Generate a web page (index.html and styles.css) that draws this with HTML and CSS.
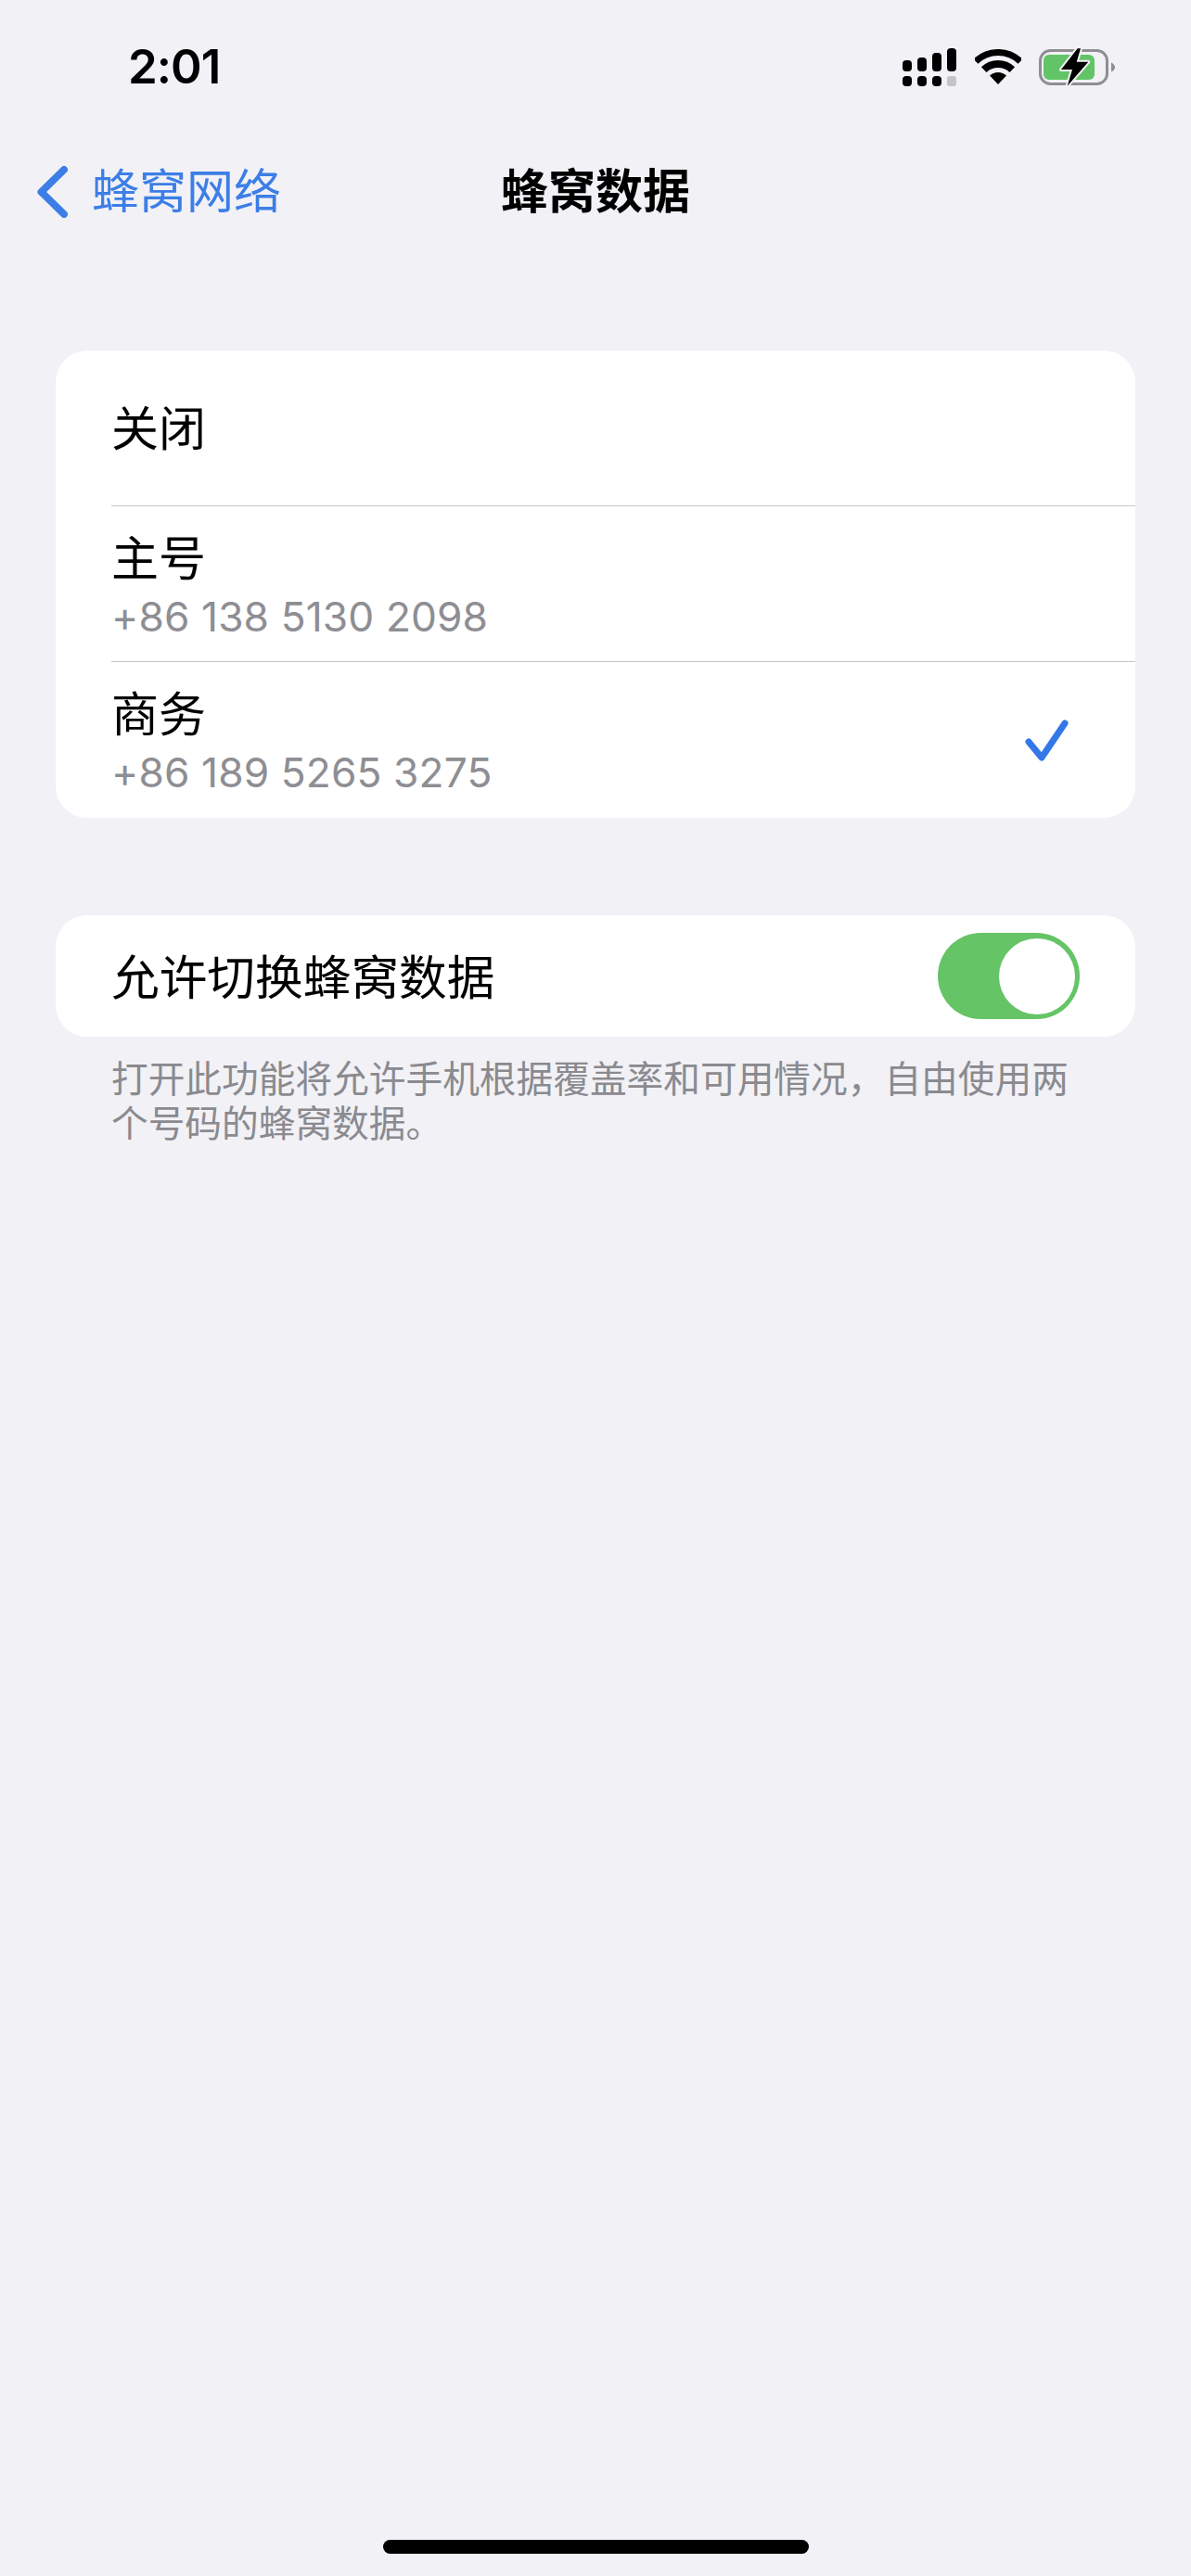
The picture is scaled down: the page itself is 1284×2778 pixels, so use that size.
FILE: index.html
```html
<!DOCTYPE html>
<html lang="zh-CN">
<head>
<meta charset="utf-8">
<title>蜂窝数据</title>
<link rel="stylesheet" href="styles.css">
</head>
<body>
<div class="screen">
  <header class="status">
    <span class="time">2:01</span>
    <div class="status-icons">
      <svg class="ic-signal" viewBox="0 0 58 41" width="58" height="41">
        <rect x="0" y="13" width="10" height="12" rx="4"/>
        <rect x="16" y="10" width="10" height="15" rx="4"/>
        <rect x="32" y="5" width="10" height="20" rx="4"/>
        <rect x="48" y="0" width="10" height="25" rx="4"/>
        <rect x="0" y="30" width="10" height="11" rx="4"/>
        <rect x="16" y="30" width="10" height="11" rx="4"/>
        <rect x="32" y="30" width="10" height="11" rx="4"/>
        <rect class="dim" x="48" y="30" width="10" height="11" rx="3"/>
      </svg>
      <svg class="ic-wifi" viewBox="0 0 50 38" width="50" height="38">
        <path class="arc" stroke-width="7" d="M1 13.2A34.5 34.5 0 0 1 49 13.2"/>
        <path class="arc" stroke-width="8" d="M9.7 22.2A22 22 0 0 1 40.3 22.2"/>
        <path d="M25 38L16 28.6A13 13 0 0 1 34 28.6Z"/>
      </svg>
      <svg class="ic-battery" viewBox="0 0 82 42" width="82" height="42">
        <rect class="bat-shell" x="1.500" y="2.500" width="72" height="36" rx="11"/>
        <rect class="bat-fill" x="5" y="7" width="55" height="27" rx="6"/>
        <path class="bat-nub" d="M78 15.500C80.500 16.500 82 18.500 82 20.500C82 22.500 80.500 24.500 78 25.500Z"/>
        <path class="bat-bolt" d="M41.700.3L24 23H36L30.700 40.700L53.300 14.700H40.700L45 .3Z"/>
      </svg>
    </div>
  </header>

  <nav class="nav">
    <a class="back">
      <svg class="chevron" viewBox="0 0 33 56" width="33" height="56">
        <path d="M29 4L4.500 28L29 52"/>
      </svg>
      <span>蜂窝网络</span>
    </a>
    <h1 class="title">蜂窝数据</h1>
    <span class="nav-end"></span>
  </nav>

  <main class="content">
    <section class="card list">
      <div class="row">
        <div class="row-text"><div class="label">关闭</div></div>
      </div>
      <div class="row">
        <div class="row-text">
          <div class="label">主号</div>
          <div class="sub">+86 138 5130 2098</div>
        </div>
      </div>
      <div class="row">
        <div class="row-text">
          <div class="label">商务</div>
          <div class="sub">+86 189 5265 3275</div>
        </div>
        <svg class="check" viewBox="0 0 50 50" width="50" height="50">
          <path d="M5 26L19 43L44 6"/>
        </svg>
      </div>
    </section>

    <section class="card switch-card">
      <div class="label label-wide">允许切换蜂窝数据</div>
      <div class="toggle"><span class="knob"></span></div>
    </section>

    <p class="note">打开此功能将允许手机根据覆盖率和可用情况，自由使用两个号码的蜂窝数据。</p>
  </main>

  <div class="home-bar"><span class="home-pill"></span></div>
</div>
</body>
</html>
```

FILE: styles.css
```css
* { box-sizing: border-box; }

html, body {
  margin: 0;
  padding: 0;
  background: #f1f1f6;
}

.screen {
  width: 1284px;
  height: 2778px;
  display: flex;
  flex-direction: column;
  background: #f1f1f6;
  color: #000;
  font-family: Inter, "Noto Sans CJK SC", sans-serif;
  overflow: hidden;
}

/* status bar */
.status {
  height: 130px;
  display: flex;
  justify-content: space-between;
  align-items: flex-start;
  padding: 0 82px 0 138px;
}

.time {
  margin-top: 42px;
  font-size: 51px;
  line-height: 60px;
  font-weight: 600;
  letter-spacing: -1px;
}

.status-icons {
  display: flex;
  align-items: flex-start;
  margin-top: 52px;
  gap: 19px;
}

.ic-signal { margin-right: 1px; }
.ic-wifi { margin-top: 1px; }
.ic-signal rect { fill: #000; }
.ic-signal .dim { fill: #c4c4c7; }
.ic-wifi path { fill: #000; }
.ic-wifi .arc { fill: none; stroke: #000; }

.bat-shell { fill: none; stroke: #8e8e93; stroke-width: 3; }
.bat-fill { fill: #62c466; }
.bat-nub { fill: #8e8e93; }
.bat-bolt { fill: #000; stroke: #f1f1f6; stroke-width: 4; paint-order: stroke; stroke-linejoin: round; }

/* navigation */
.nav {
  height: 154px;
  display: grid;
  grid-template-columns: 1fr auto 1fr;
  align-items: center;
  padding: 0 40px;
}

.back {
  display: flex;
  align-items: center;
  gap: 26px;
  color: #3d7ee6;
  font-size: 51px;
  line-height: 60px;
}

.chevron path {
  fill: none;
  stroke: #3d7ee6;
  stroke-width: 8;
  stroke-linecap: round;
  stroke-linejoin: round;
}

.title {
  margin: 0;
  font-size: 51px;
  line-height: 60px;
  font-weight: 700;
}

/* content */
.content {
  padding: 94px 60px 0;
}

.card {
  background: #fff;
  border-radius: 34px;
}

.list {
  padding-left: 60px;
}

.row {
  height: 168px;
  display: flex;
  align-items: center;
  justify-content: space-between;
  padding: 2px 70px 0 0;
  border-bottom: 1px solid #c6c6c8;
}

.row:last-child { border-bottom: 0; }

.label {
  font-size: 51px;
  line-height: 64px;
}

.label-wide { font-size: 51.700px; }

.sub {
  margin-top: 4px;
  font-size: 44.300px;
  line-height: 52px;
  letter-spacing: 0.1px;
  color: #8e8e93;
}

.check path {
  fill: none;
  stroke: #3478e8;
  stroke-width: 7;
  stroke-linecap: round;
  stroke-linejoin: round;
}

.switch-card {
  height: 131px;
  margin-top: 105px;
  padding: 2px 60px 0;
  display: flex;
  align-items: center;
  justify-content: space-between;
}

.toggle {
  width: 153px;
  height: 93px;
  margin-top: -2px;
  border-radius: 47px;
  background: #64c466;
  display: flex;
  align-items: center;
  justify-content: flex-end;
  padding-right: 5px;
}

.knob {
  width: 82px;
  height: 82px;
  border-radius: 50%;
  background: #fff;
}

.note {
  margin: 22px 0 0;
  padding: 0 60px;
  font-size: 39.700px;
  line-height: 48px;
  color: #8a8a8f;
}

/* home indicator */
.home-bar {
  margin-top: auto;
  height: 39px;
  display: flex;
  justify-content: center;
}

.home-pill {
  width: 459px;
  height: 15px;
  border-radius: 8px;
  background: #000;
}
```
